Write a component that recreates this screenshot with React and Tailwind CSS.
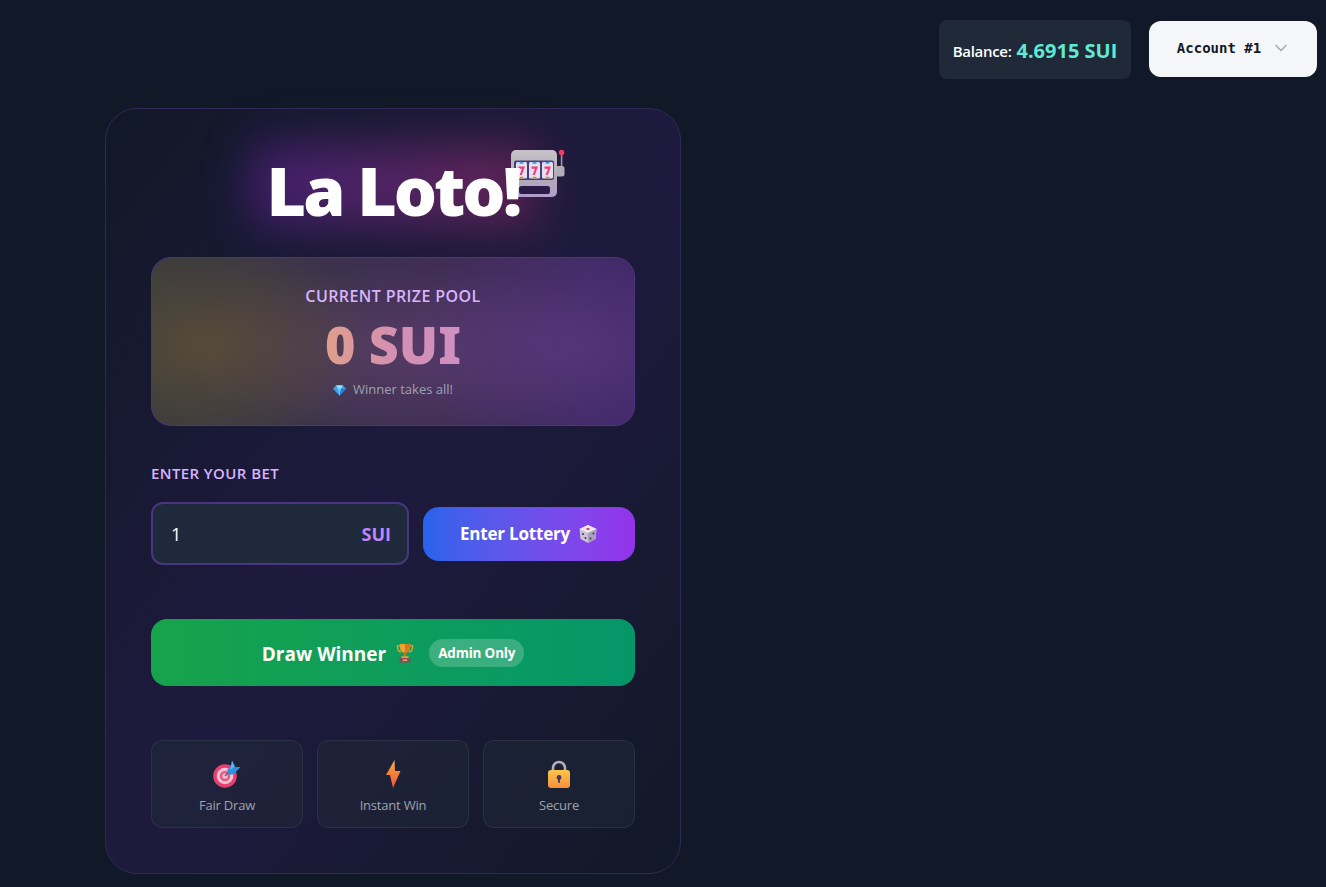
import { ChevronDown } from 'lucide-react'

const UI_FONT = "font-['Open_Sans','Noto_Sans',sans-serif]"

function SlotMachine({ className }) {
  return (
    <svg viewBox="0 0 56 50" className={className}>
      <defs>
        <linearGradient id="slotBody" x1="0" y1="0" x2="0" y2="1">
          <stop offset="0" stopColor="#c6c2c8" />
          <stop offset="0.55" stopColor="#b3adb6" />
          <stop offset="1" stopColor="#b29dcc" />
        </linearGradient>
      </defs>
      <rect x="49.800" y="5" width="1.600" height="14" fill="#9d99a3" />
      <path d="M46 18h5a2.500 2.500 0 0 1 2.500 2.500V26a2.500 2.500 0 0 1-2.500 2.500h-5z" fill="#b2adb6" />
      <circle cx="50.600" cy="4.500" r="2.700" fill="#ef3d68" />
      <rect x="0" y="2" width="46" height="47" rx="5" fill="url(#slotBody)" />
      <rect x="3" y="12.500" width="40" height="19.500" rx="2" fill="#44407c" />
      {[5, 18, 31].map((x) => (
        <g key={x}>
          <rect x={x} y="14" width="11" height="16.500" rx="1.500" fill="#e6dff0" />
          <path d={`M${x + 2.500} 18.500h6.500l-3.200 8.500h-2.200l2.400-6.200h-3.500z`} fill="#ee3f74" />
          <rect x={x + 3.500} y="14" width="4" height="1.800" fill="#3ea2ee" />
          <rect x={x + 3.500} y="28.700" width="4" height="1.800" fill="#d49a3c" />
        </g>
      ))}
      <rect x="8" y="38" width="31" height="8" rx="2.500" fill="#2a1c46" />
    </svg>
  )
}

function Diamond({ className }) {
  return (
    <svg viewBox="0 0 16 14" className={className}>
      <path d="M4 1h8l4 4.500L8 14 0 5.500z" fill="#38a3f1" />
      <path d="M4 1h8l-2 4.500H6z" fill="#9ddcff" />
      <path d="M6 5.500h4L8 14z" fill="#6cc4fa" />
      <path d="M10 5.500h6L8 14z" fill="#1e7fd6" />
    </svg>
  )
}

function Dice({ className }) {
  return (
    <svg viewBox="0 0 20 20" className={className}>
      <path d="M10 1l8.500 4-1 10L10 19l-7.500-4-1-10z" fill="#c9c2d3" />
      <path d="M10 1l8.500 4L10 9 1.500 5z" fill="#ece8f0" />
      <path d="M10 9l8.500-4-1 10L10 19z" fill="#a9a1b8" />
      <ellipse cx="10" cy="5" rx="1.800" ry="1" fill="#e8385f" />
      <circle cx="5" cy="10" r="1" fill="#3d3560" />
      <circle cx="7.500" cy="14" r="1" fill="#3d3560" />
      <circle cx="12.500" cy="14.500" r="1" fill="#3d3560" />
      <circle cx="15.500" cy="9.500" r="1" fill="#3d3560" />
    </svg>
  )
}

function Trophy({ className }) {
  return (
    <svg viewBox="0 0 20 22" className={className}>
      <path d="M4 3H1.500c0 4 1.500 6.500 4 7M16 3h2.500c0 4-1.500 6.500-4 7" fill="none" stroke="#e6a52e" strokeWidth="1.400" />
      <path d="M4 1h12c0 6-1.500 10-6 10S4 7 4 1z" fill="#f0a32c" />
      <path d="M10 1h6c0 6-1.500 10-6 10z" fill="#d9791f" />
      <rect x="8.700" y="10" width="2.600" height="5" fill="#c9761f" />
      <rect x="6" y="14.500" width="8" height="2" rx="0.500" fill="#e6a52e" />
      <rect x="4" y="16.500" width="12" height="5" rx="1" fill="#8a4a58" />
      <rect x="7.500" y="18" width="5" height="2" fill="#d9a05a" />
    </svg>
  )
}

function Target({ className }) {
  return (
    <svg viewBox="0 0 28 28" className={className}>
      <circle cx="12" cy="16" r="11.800" fill="#e83f70" />
      <circle cx="12" cy="16" r="8.300" fill="#f3c4d4" />
      <circle cx="12" cy="16" r="5.300" fill="#e85d88" />
      <circle cx="12" cy="16" r="2.600" fill="#f3c4d4" />
      <path d="M12 16L20 8" stroke="#5a5f80" strokeWidth="1.400" />
      <path d="M14 10l6-6 2 3 5.500 0-6.500 7-5 1z" fill="#2f8fe0" />
      <path d="M19 0.500l3 6L17 10z" fill="#57b4f2" />
    </svg>
  )
}

function Bolt({ className }) {
  return (
    <svg viewBox="0 0 16 28" className={className}>
      <defs>
        <linearGradient id="bolt" x1="0" y1="0" x2="0" y2="1">
          <stop offset="0" stopColor="#fbb034" />
          <stop offset="1" stopColor="#f0503c" />
        </linearGradient>
      </defs>
      <path d="M9.500 0L1 15h5l-1 0 3 13 7.500-17H10z" fill="url(#bolt)" />
    </svg>
  )
}

function Lock({ className }) {
  return (
    <svg viewBox="0 0 24 28" className={className}>
      <defs>
        <linearGradient id="lock" x1="0" y1="0" x2="0" y2="1">
          <stop offset="0" stopColor="#fcc64a" />
          <stop offset="1" stopColor="#f78f3c" />
        </linearGradient>
      </defs>
      <path d="M6 12V8a6 6 0 0 1 12 0v4" fill="none" stroke="#b3adbc" strokeWidth="2.600" />
      <rect x="1" y="10" width="22" height="18" rx="3" fill="url(#lock)" />
      <circle cx="12" cy="17.500" r="2.400" fill="#4a3a55" />
      <rect x="11" y="18" width="2" height="5" rx="1" fill="#4a3a55" />
    </svg>
  )
}

const FEATURES = [
  { label: 'Fair Draw', icon: Target, size: 'h-[28px] w-[28px]' },
  { label: 'Instant Win', icon: Bolt, size: 'h-[28px] w-[16px]' },
  { label: 'Secure', icon: Lock, size: 'h-[28px] w-[24px]' },
]

export default function App() {
  return (
    <div className={`min-h-[887px] bg-[#111827] ${UI_FONT}`}>
      <header className="flex items-center justify-end gap-[18px] pr-[9px] pt-[20px]">
        <div className="flex h-[59px] w-[192px] items-center justify-center gap-[5px] rounded-lg bg-[#1f2937] pt-[2px] text-white">
          <span className="pt-[2px] text-[15px] font-semibold tracking-[-0.3px]">Balance:</span>
          <span className="text-xl font-bold text-[#5eead4]">4.6915 SUI</span>
        </div>
        <button className="mb-[2px] flex h-[56px] w-[168px] items-center justify-center gap-[10px] rounded-xl bg-[#f5f6f8] pb-[1px] pl-[2px] text-[#111827]">
          <span className="font-['DejaVu_Sans_Mono',monospace] text-[14px] font-bold">Account #1</span>
          <ChevronDown className="h-5 w-5 text-[#a3acb9]" strokeWidth={2} />
        </button>
      </header>

      <main className="ml-[105px] mt-[29px] h-[766px] w-[576px] rounded-[32px] border border-[#2f2a55] bg-gradient-to-br from-[#111827] via-[#1e1a3e] to-[#111827] px-[45px]">
        <div className="relative flex h-[148px] items-end justify-center">
          <div className="absolute left-[100px] top-[36px] h-[80px] w-[284px] bg-gradient-to-r from-[#6b21a8] to-[#9d2a6b] opacity-55 blur-xl" />
          <SlotMachine className="absolute left-[360px] top-[39px] h-[50px] w-[56px]" />
          <h1 className="relative pb-[33px] font-['Noto_Sans',sans-serif] text-[68px] leading-none font-black tracking-[-3px] text-white">La Loto!</h1>
        </div>

        <section className="flex h-[169px] flex-col items-center rounded-[20px] border border-[#4d3580] bg-[radial-gradient(ellipse_170px_110px_at_11%_52%,#574b38_0%,rgba(87,75,56,0)_100%),radial-gradient(ellipse_170px_100px_at_86%_52%,#533578_0%,rgba(83,53,120,0)_100%),radial-gradient(ellipse_230px_85px_at_52%_55%,rgba(92,62,104,0.8)_0%,rgba(92,62,104,0)_100%),linear-gradient(90deg,#363a3c,#3f2f54_55%,#41286a)] pt-[27px]">
          <p className="text-base leading-[22px] font-semibold tracking-[0.4px] text-[#d8b4fe]">CURRENT PRIZE POOL</p>
          <p className="mt-[5px] bg-gradient-to-r from-[#df9f8a] via-[#d490b0] to-[#cf90c2] bg-clip-text font-['Noto_Sans',sans-serif] text-[52px] leading-[64px] font-black text-transparent">0 SUI</p>
          <p className="mt-[4px] flex items-center gap-[7px] text-[13px] text-[#9ca3af]">
            <Diamond className="h-[12px] w-[13px]" />
            Winner takes all!
          </p>
        </section>

        <label className="mt-[37px] block text-[15px] leading-5 font-semibold tracking-[0.4px] text-[#d8b4fe]">ENTER YOUR BET</label>
        <div className="mt-[19px] flex items-center gap-[14px]">
          <div className="flex h-[63px] w-[258px] items-center justify-between rounded-xl border-2 border-[#4a3580] bg-[#1e293b] pl-[18px] pr-[16px]">
            <span className="text-lg text-white">1</span>
            <span className="text-lg font-bold text-[#c084fc]">SUI</span>
          </div>
          <button className="flex h-[54px] w-[212px] items-center justify-center gap-[8px] rounded-2xl bg-gradient-to-r from-[#2563eb] to-[#9333ea] text-[17px] font-bold tracking-[-0.2px] text-white">
            Enter Lottery
            <Dice className="h-[20px] w-[20px]" />
          </button>
        </div>

        <button className="mt-[54px] flex h-[67px] w-full items-center justify-center rounded-2xl bg-gradient-to-r from-[#16a34a] to-[#059669] text-white">
          <span className="pt-[3px] text-[19px] font-bold">Draw Winner</span>
          <Trophy className="ml-[10px] h-[20px] w-[18px]" />
          <span className="ml-[15px] rounded-full bg-white/20 px-[9px] py-[4px] text-[13.5px] leading-5 font-bold tracking-[-0.2px]">Admin Only</span>
        </button>

        <div className="mt-[54px] grid grid-cols-3 gap-[14px]">
          {FEATURES.map((f) => {
            const Icon = f.icon
            return (
              <div key={f.label} className="flex h-[88px] flex-col items-center rounded-xl border border-[#374151]/50 bg-[#1f2937]/50 pt-[19px]">
                <Icon className={f.size} />
                <span className="mt-[7px] text-[13px] leading-5 tracking-[-0.2px] text-[#9ca3af]">{f.label}</span>
              </div>
            )
          })}
        </div>
      </main>
    </div>
  )
}
